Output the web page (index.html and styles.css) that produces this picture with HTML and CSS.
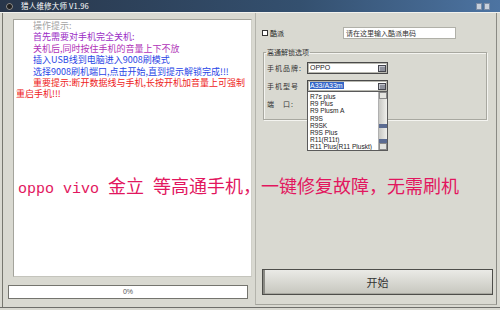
FILE: index.html
```html
<!DOCTYPE html>
<html lang="zh-CN">
<head>
  <meta charset="UTF-8">
  <title>猎人维修大师 V1.96</title>
  <link rel="stylesheet" href="styles.css">
</head>
<body>
  <div class="window">
    <!-- Barra de título -->
    <div class="titlebar">
      <span class="app-icon"></span>
      <span class="title">猎人维修大师 V1.96</span>
      <span class="win-btns">
        <span class="win-btn"></span>
        <span class="win-btn"></span>
      </span>
    </div>

    <div class="main">
      <!-- Panel izquierdo: registro y progreso -->
      <div class="left-panel">
        <div class="log">
          <p class="line indent grey">操作提示:</p>
          <p class="line indent purple">首先需要对手机完全关机:</p>
          <p class="line indent magenta">关机后,同时按住手机的音量上下不放</p>
          <p class="line indent blue">插入USB线到电脑进入9008刷模式</p>
          <p class="line indent blue">选择9008刷机端口,点击开始,直到提示解锁完成!!!</p>
          <p class="line indent red">重要提示:断开数据线与手机,长按开机加音量上可强制</p>
          <p class="line red">重启手机!!!</p>
        </div>
        <div class="progress">0%</div>
      </div>

      <!-- Panel derecho: opciones -->
      <div class="right-panel">
        <div class="coolpad-row">
          <label class="check"><span class="check-box"></span>酷派</label>
          <div class="text-input">请在这里输入酷派串码</div>
        </div>

        <fieldset class="group">
          <legend>高通解锁选项</legend>
          <div class="field">
            <span class="field-label">手机品牌:</span>
            <div class="combo">
              <span class="combo-text">OPPO</span>
              <span class="drop-btn"></span>
            </div>
          </div>
          <div class="field">
            <span class="field-label">手机型号</span>
            <div class="combo">
              <span class="combo-text"><span class="selected">A33/A33m</span></span>
              <span class="drop-btn"></span>
              <div class="drop-list">
                <ul>
                  <li>R7s plus</li>
                  <li>R9 Plus</li>
                  <li>R9 Plusm A</li>
                  <li>R9S</li>
                  <li>R9SK</li>
                  <li>R9S Plus</li>
                  <li>R11(R11t)</li>
                  <li>R11 Plus(R11 Pluskt)</li>
                </ul>
                <div class="scrollbar">
                  <span class="sb-btn up"></span>
                  <span class="sb-track"></span>
                  <span class="sb-mark"></span>
                  <span class="sb-track short"></span>
                  <span class="sb-mark"></span>
                  <span class="sb-btn down"></span>
                </div>
              </div>
            </div>
          </div>
          <div class="field">
            <span class="field-label">端　口:</span>
          </div>
        </fieldset>

        <button class="start-btn">开始</button>
      </div>
    </div>

    <!-- Texto rojo superpuesto -->
    <div class="banner"><span class="latin">oppo vivo </span>金立<span class="latin"> </span>等高通手机，一键修复故障，无需刷机</div>
  </div>
</body>
</html>
```

FILE: styles.css
```css
/* Estilos básicos */
body {
  margin: 0;
  padding: 0;
  background-color: #d9d9d1;
  font-family: "Noto Sans CJK SC", sans-serif;
}

.window {
  position: relative;
  width: 500px;
  height: 310px;
  display: flex;
  flex-direction: column;
  overflow: hidden;
}

/* Barra de título */
.titlebar {
  height: 12px;
  display: flex;
  align-items: center;
  background: linear-gradient(to right, #28364a, #34506f 60%, #4d74a2);
  color: #fff;
  padding-left: 6px;
}

.app-icon {
  width: 7px;
  height: 7px;
  border-radius: 50%;
  background: radial-gradient(circle, #222 40%, #8a8a8a 60%, #333 80%);
}

.title {
  margin-left: 8px;
  font-size: 7.5px;
  line-height: 12px;
  letter-spacing: 0.2px;
}

.win-btns {
  margin-left: auto;
  margin-right: 10px;
  display: flex;
  gap: 2px;
}

.win-btn {
  width: 6px;
  height: 7px;
  background-color: #c8d0dc;
  border: 1px solid #7c8ca4;
  box-sizing: border-box;
}

/* Zona principal */
.main {
  flex: 1;
  display: flex;
  border-top: 1px solid #f2f2ee;
  padding-left: 2px;
  border-bottom: 1px solid #6e6e6a;
  margin-bottom: 2px;
}

.left-panel {
  width: 252px;
  border-left: 1px solid #77776f;
  display: flex;
  flex-direction: column;
  padding-top: 6px;
}

.log {
  margin-left: 10px;
  width: 239px;
  height: 258px;
  box-sizing: border-box;
  background-color: #fff;
  border: 1px solid #a4a49c;
  border-right-color: #d0d0c8;
  border-bottom-color: #c4c4bc;
  padding: 0 0 0 2px;
  font-size: 9px;
  line-height: 11.4px;
  white-space: nowrap;
}

.line {
  margin: 0;
}

.indent {
  text-indent: 17px;
}

.grey { color: #a4a4a4; }
.purple { color: #9a2cc6; }
.magenta { color: #b032b8; }
.blue { color: #2a46e6; }
.red { color: #ee2222; }

.progress {
  margin: 8px 0 0 5px;
  width: 240px;
  height: 14px;
  box-sizing: border-box;
  background-color: #fff;
  border: 1px solid #74746e;
  font-family: "Liberation Sans", sans-serif;
  font-size: 7px;
  line-height: 12px;
  text-align: center;
  color: #555;
}

/* Panel derecho */
.right-panel {
  flex: 1;
  display: flex;
  flex-direction: column;
  border-left: 1px solid #b4b4ac;
  border-right: 1px solid #8a8a84;
  border-bottom: 1px solid #a4a49c;
  margin: 0 3px 2px 0;
  font-size: 7px;
  color: #222;
}

.coolpad-row {
  margin-top: 14px;
  display: flex;
  align-items: center;
  height: 12px;
  padding-left: 6px;
}

.check {
  display: flex;
  align-items: center;
  gap: 2px;
  width: 81px;
}

.check-box {
  width: 6px;
  height: 6px;
  box-sizing: border-box;
  border: 1px solid #333;
  background-color: #fff;
}

.text-input {
  width: 113px;
  height: 12px;
  box-sizing: border-box;
  background-color: #fff;
  border: 1px solid #b0b0a8;
  padding-left: 2px;
  line-height: 10px;
  color: #333;
}

.group {
  margin: 9px 0 0 7px;
  width: 224px;
  box-sizing: border-box;
  padding: 6px 0 9px 3px;
  border: 1px solid #a8a8a0;
  box-shadow: 1px 1px 0 #f4f4f0, inset 1px 1px 0 #f4f4f0;
  display: flex;
  flex-direction: column;
  gap: 6px;
}

.group legend {
  padding: 0 1px;
  margin-left: -1px;
  font-size: 7px;
  line-height: 8px;
  color: #333;
}

.field {
  display: flex;
  align-items: center;
  height: 12px;
}

.field-label {
  width: 40px;
  letter-spacing: 1px;
  color: #333;
}

.combo {
  position: relative;
  width: 81px;
  height: 12px;
  box-sizing: border-box;
  background-color: #fff;
  border: 1px solid #4a4a4a;
  box-shadow: inset 0 0 0 1px #b8b8b0;
  display: flex;
  align-items: center;
  padding: 0 1px 0 2px;
  font-family: "Liberation Sans", sans-serif;
}

.combo-text {
  flex: 1;
  font-size: 7px;
  line-height: 8px;
}

.selected {
  background-color: #3466c8;
  color: #fff;
  padding-right: 1px;
}

.drop-btn {
  width: 8px;
  height: 7px;
  box-sizing: border-box;
  border: 1px solid #45464e;
  background-color: #8e919c;
  box-shadow: inset 1px 1px 0 #c4c6ce;
}

/* Lista desplegable abierta */
.drop-list {
  position: absolute;
  top: 100%;
  left: -1px;
  width: 81px;
  height: 60px;
  box-sizing: border-box;
  background-color: #fff;
  border: 1px solid #5a5a5a;
  display: flex;
  z-index: 10;
}

.drop-list ul {
  flex: 1;
  list-style: none;
  margin: 0;
  padding: 1px 0 0 2px;
  font-size: 6.6px;
  line-height: 7.2px;
  color: #222;
  white-space: nowrap;
  overflow: hidden;
}

.scrollbar {
  width: 8px;
  display: flex;
  flex-direction: column;
  background-color: #dcdcd8;
  border-left: 1px solid #b0b0b0;
}

.sb-btn {
  height: 7px;
  background-color: #e4e4e0;
  border: 1px solid #8a8a8a;
  box-sizing: border-box;
}

.sb-track {
  flex: 1;
  background: linear-gradient(to right, #c8c8c4, #f0f0ec);
}

.sb-track.short {
  flex: 0 0 11px;
}

.sb-mark {
  height: 4px;
  background-color: #5c6c92;
}

.start-btn {
  margin: auto 3px 9px 6px;
  height: 26px;
  border: 1px solid #4e4e4a;
  box-shadow: inset 2px 0 0 #8a8a84, inset 0 -1px 0 #a8a8a0;
  background: linear-gradient(#eaeae6, #c6c6be);
  font-family: "Noto Sans CJK SC", sans-serif;
  font-size: 11px;
  color: #333;
  padding: 0;
}

/* Texto superpuesto */
.banner {
  position: absolute;
  left: 18px;
  top: 176px;
  font-size: 18px;
  line-height: 18px;
  color: #e2165e;
  white-space: nowrap;
}

.banner .latin {
  font-family: "Liberation Mono", monospace;
  font-size: 15px;
  white-space: pre;
}
```
